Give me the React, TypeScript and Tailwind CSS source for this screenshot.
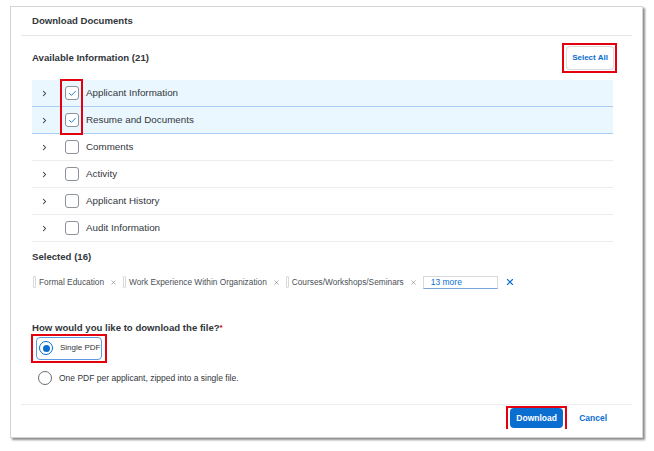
import { ChevronRight, Check, X } from "lucide-react";

const rows = [
  { label: "Applicant Information", checked: true },
  { label: "Resume and Documents", checked: true },
  { label: "Comments", checked: false },
  { label: "Activity", checked: false },
  { label: "Applicant History", checked: false },
  { label: "Audit Information", checked: false },
];

const tokens = ["Formal Education", "Work Experience Within Organization", "Courses/Workshops/Seminars"];

export default function App() {
  return (
    <div className="w-[654px] h-[451px] bg-white pt-[6px] pl-[10px] font-['Liberation_Sans',Arial,sans-serif] text-[#32363a]">
      <div className="w-[633px] h-[432px] bg-white border border-[#d4d4d4] shadow-[2px_2px_2px_rgba(0,0,0,0.45)] flex flex-col">
        {/* HEADER */}
        <div className="h-[29px] mx-[10px] border-b border-[#e5e5e5] flex items-center px-[11px] text-[9.6px] font-bold">
          Download Documents
        </div>

        {/* BODY */}
        <div className="pl-[21px] pr-[29px]">
          <div className="h-[44px] flex items-center justify-between">
            <span className="text-[9.6px] font-bold">Available Information (21)</span>
            <div className="relative -mr-[1px]">
              <button className="block h-[24px] w-[48px] rounded-[4px] border border-[#dcdcdc] bg-white text-[8px] font-bold text-[#0a6ed1] shadow-[0_0_1px_rgba(0,0,0,0.15)]">
                Select All
              </button>
              <div className="absolute -top-[3px] -bottom-[3px] -left-[4px] -right-[3px] border-2 border-[#e3000f]" />
            </div>
          </div>

          <div className="relative">
            {rows.map((r) => (
              <div
                key={r.label}
                className={`h-[27px] flex items-center pl-[8px] border-b ${
                  r.checked ? "bg-[#ebf7fe] border-[#a9cdf3]" : "border-[#ececec]"
                }`}
              >
                <ChevronRight size={9} strokeWidth={2.8} className="text-[#32363a]" />
                <div className="ml-[16px] w-[14px] h-[14px] rounded-[3px] border border-[#8c9298] bg-white flex items-center justify-center">
                  {r.checked && <Check size={9} strokeWidth={2.4} color="#0a6ed1" />}
                </div>
                <span className="ml-[7px] text-[9.8px]">{r.label}</span>
              </div>
            ))}
            <div className="absolute left-[28px] -top-[1px] w-[23px] h-[56px] border-2 border-[#e3000f]" />
          </div>

          <div className="h-[30px] flex items-center text-[9.6px] font-bold">Selected (16)</div>

          <div className="h-[20px] flex items-center text-[8.3px] text-[#4a4f55]">
            {tokens.map((t) => (
              <div key={t} className="flex items-center mr-[5px]">
                <span className="w-[3px] h-[12px] border border-[#d5d9dd] rounded-[1px] ml-[1px]" />
                <span className="ml-[3px]">{t}</span>
                <X size={7} strokeWidth={1.8} className="ml-[6px] text-[#6a6d70]" />
              </div>
            ))}
            <div className="ml-[1px] w-[75px] h-[13px] border border-[#d5dadf] border-b-[#7ba6da] flex items-center pl-[7px] text-[#0a6ed1] text-[8.5px]">
              13 more
            </div>
            <X size={10} strokeWidth={2.6} className="ml-[7px] text-[#0a6ed1]" />
          </div>

          <div className="mt-[28px] h-[16px] flex items-center text-[9.6px] font-bold">
            How would you like to download the file?<span className="text-[#bb0000] text-[8px] self-start mt-[2px]">*</span>
          </div>

          <div className="h-[24px] flex items-center">
            <div className="relative ml-[4px] h-[23px] w-[66px] rounded-[4px] border border-[#5b9ae0] flex items-center pl-[2px]">
              <div className="w-[14px] h-[14px] rounded-full border border-[#0a6ed1] flex items-center justify-center bg-white">
                <div className="w-[7px] h-[7px] rounded-full bg-[#0a6ed1]" />
              </div>
              <span className="ml-[7px] text-[8px] whitespace-nowrap">Single PDF</span>
              <div className="absolute -top-[4px] -bottom-[4px] -left-[6px] -right-[6px] border-2 border-[#e3000f]" />
            </div>
          </div>

          <div className="mt-[6px] h-[24px] flex items-center pl-[6px]">
            <div className="w-[14px] h-[14px] rounded-full border-[1.5px] border-[#6a6d70] bg-white" />
            <span className="ml-[7px] text-[8.5px]">One PDF per applicant, zipped into a single file.</span>
          </div>
        </div>

        <div className="flex-1" />

        {/* FOOTER */}
        <div className="h-[33px] mx-[10px] border-t border-[#ececec] flex items-start justify-end pt-[3px] pr-[25px]">
          <div className="relative">
            <button className="block h-[20px] w-[53px] rounded-[4px] bg-[#0a6ed1] text-white text-[8.5px] font-bold">
              Download
            </button>
            <div className="absolute -top-[2px] -bottom-[1px] -left-[4px] -right-[4px] border-2 border-b-0 border-[#e3000f]" />
          </div>
          <button className="ml-[16px] h-[20px] text-[8.5px] font-bold text-[#0a6ed1]">Cancel</button>
        </div>
      </div>
    </div>
  );
}
